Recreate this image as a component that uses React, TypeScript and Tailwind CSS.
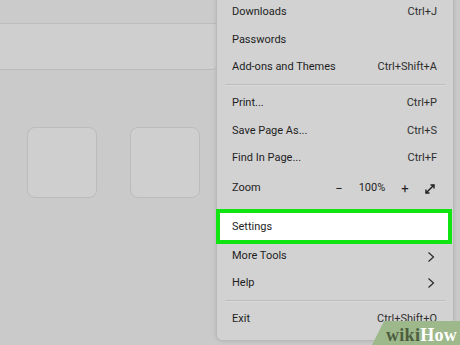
import React from 'react';

type MenuItem = {
  label: string;
  shortcut?: string;
  submenu?: boolean;
  rowClass: string;
};

const topItems: MenuItem[] = [
  { label: 'Downloads', shortcut: 'Ctrl+J', rowClass: 'h-[28px]' },
  { label: 'Passwords', rowClass: 'h-[28px]' },
  { label: 'Add-ons and Themes', shortcut: 'Ctrl+Shift+A', rowClass: 'h-[27px]' },
];

const pageItems: MenuItem[] = [
  { label: 'Print...', shortcut: 'Ctrl+P', rowClass: 'h-[28px]' },
  { label: 'Save Page As...', shortcut: 'Ctrl+S', rowClass: 'h-[28px]' },
  { label: 'Find In Page...', shortcut: 'Ctrl+F', rowClass: 'h-[27px]' },
];

const Chevron = () => (
  <svg width="8" height="12" viewBox="0 0 8 12" fill="none" stroke="#2a2a2a" strokeWidth={1.2}>
    <path d="M1.5 1.5 L6.5 6 L1.5 10.5" />
  </svg>
);

const Row: React.FC<{ item: MenuItem }> = ({ item }) => (
  <div className={`flex items-center justify-between pl-[15px] pr-[16px] ${item.rowClass}`}>
    <span>{item.label}</span>
    {item.shortcut && <span className="text-[#2e2e2e]">{item.shortcut}</span>}
    {item.submenu && (
      <span className="mr-[2px]">
        <Chevron />
      </span>
    )}
  </div>
);

const Separator = () => (
  <div className="flex items-center h-[8px] px-[8px]">
    <div className="h-[2px] w-full bg-[#bdbdbd] border-b border-[#dadada]" />
  </div>
);

const Tile = () => (
  <div className="w-[70px] h-[71px] rounded-[8px] bg-[#cfcfcf] border border-[#bcbcbc]" />
);

export default function App() {
  return (
    <div
      className="relative w-[460px] h-[345px] overflow-hidden flex bg-[#cacaca] text-[11px] text-[#1e1e1e]"
      style={{ fontFamily: 'Roboto, "Noto Sans", sans-serif' }}
    >
      {/* page behind the menu */}
      <div className="w-[216px] flex flex-col">
        <div className="h-[24px] bg-[#cbcbcb] border-b border-[#bcbcbc]" />
        <div className="h-[46px] bg-[#cfcfcf] border-b border-[#b9b9b9] rounded-br-[4px]" />
        <div className="flex-1 flex gap-[33px] pl-[27px] pt-[57px]">
          <Tile />
          <Tile />
        </div>
      </div>

      {/* app menu */}
      <div className="w-[238px] h-[343px] bg-[#d2d2d2] border-l border-r border-b border-[#bababa] rounded-b-[6px] shadow-[0_0_4px_rgba(0,0,0,0.12)] flex flex-col mt-[-2px]">
        {topItems.map((item) => (
          <Row key={item.label} item={item} />
        ))}
        <Separator />
        {pageItems.map((item) => (
          <Row key={item.label} item={item} />
        ))}

        <div className="flex items-center h-[33px] pl-[15px] pr-[16px]">
          <span className="flex-1">Zoom</span>
          <span className="w-[16px] text-center text-[13px] leading-none">−</span>
          <span className="ml-[10px] w-[30px] text-center">100%</span>
          <span className="ml-[11px] w-[14px] text-center text-[13px] leading-none">+</span>
          <span className="ml-[11px] flex items-center justify-center w-[14px]">
            <svg width="12" height="12" viewBox="0 0 12 12" fill="none" stroke="#1e1e1e" strokeWidth={1.4}>
              <path d="M2 10 L10 2" />
              <path d="M6.5 2 H10 V5.5" />
              <path d="M2 6.5 V10 H5.5" />
            </svg>
          </span>
        </div>

        <div className="mt-[4px] h-[35px] border-[4px] border-[#11e511] bg-white flex items-center pt-[2px] pl-[12px] ml-[-1px] mr-[1px]">
          Settings
        </div>

        <Row item={{ label: 'More Tools', submenu: true, rowClass: 'h-[25px]' }} />
        <Row item={{ label: 'Help', submenu: true, rowClass: 'h-[28px]' }} />
        <Separator />
        <Row item={{ label: 'Exit', shortcut: 'Ctrl+Shift+Q', rowClass: 'h-[28px]' }} />
      </div>

      {/* wikiHow watermark */}
      <div className="absolute right-0 bottom-0 w-[88px] h-[24px]">
        <svg className="absolute inset-0" width="88" height="24" viewBox="0 0 88 24">
          <polygon points="12,0 88,0 88,24 0,24" fill="#9db88a" />
        </svg>
        <div
          className="absolute left-[14px] bottom-[1px] text-[18px] font-bold leading-none tracking-[0.3px]"
          style={{ fontFamily: '"Liberation Serif", serif' }}
        >
          <span className="text-[#4d5d40]">wiki</span>
          <span className="text-white">How</span>
        </div>
      </div>
    </div>
  );
}
